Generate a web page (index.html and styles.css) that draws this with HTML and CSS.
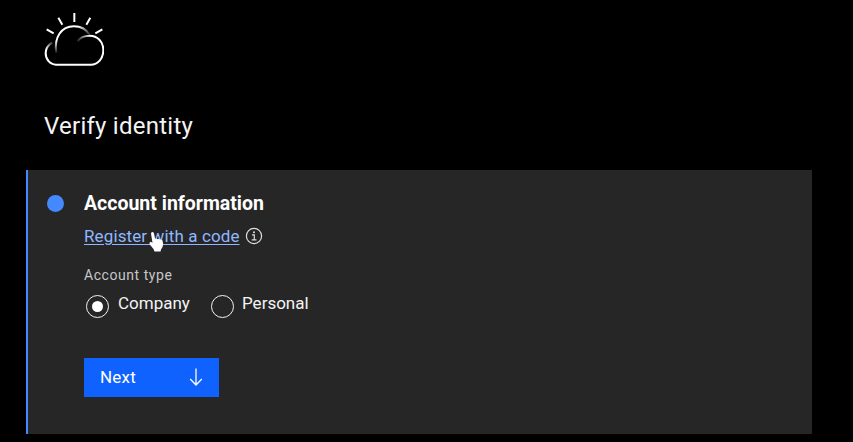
FILE: index.html
```html
<!DOCTYPE html>
<html lang="en">
<head>
<meta charset="utf-8">
<title>Verify identity</title>
<link rel="stylesheet" href="styles.css">
</head>
<body>
<main class="page">
  <svg class="logo" viewBox="30 24 180 162" fill="none" stroke="#fff" stroke-width="6">
    <defs>
      <linearGradient id="sun" gradientUnits="userSpaceOnUse" x1="67" y1="147" x2="67" y2="110"><stop offset="0" stop-color="#fff" stop-opacity="0.1"/><stop offset="1" stop-color="#fff"/></linearGradient>
      <linearGradient id="top" gradientUnits="userSpaceOnUse" x1="130" y1="70" x2="168" y2="92"><stop offset="0" stop-color="#fff"/><stop offset="1" stop-color="#fff" stop-opacity="0.15"/></linearGradient>
      <linearGradient id="puff" gradientUnits="userSpaceOnUse" x1="130" y1="112" x2="170" y2="95"><stop offset="0" stop-color="#fff" stop-opacity="0.1"/><stop offset="1" stop-color="#fff"/></linearGradient>
      <linearGradient id="left" gradientUnits="userSpaceOnUse" x1="55" y1="114" x2="38" y2="136"><stop offset="0" stop-color="#fff" stop-opacity="0.15"/><stop offset="1" stop-color="#fff"/></linearGradient>
    </defs>
    <path d="M121 27V54M73 41l12 21M169 41l-12 21M38 76l21 12M205 76l-21 12"/>
    <path stroke="url(#sun)" d="M67 147C59 100 82 67 120 67"/>
    <path stroke="url(#top)" d="M120 67C141 67 157 77 166 91"/>
    <path stroke="url(#puff)" d="M130 112C138 100 152 95 168 95"/>
    <path stroke="url(#left)" d="M55 115C42 123 35 136 35 148"/>
    <path d="M35 147C35 166 48 182 66 182H170C193 182 208 162 208 138C208 113 190 95 167 95"/>
  </svg>
  <h1 class="title">Verify identity</h1>
  <section class="card">
    <header class="step">
      <span class="dot"></span>
      <h2 class="step-title">Account information</h2>
    </header>
    <div class="content">
      <div class="register">
        <a class="link">Register with a code</a>
        <svg class="info" viewBox="0 0 18 18" fill="none" stroke="#ddd" stroke-width="1.2"><circle cx="9" cy="9" r="7.6"/><path d="M7 7.8h2.3v5M6.7 12.8h4.8"/><circle cx="9" cy="5.2" r=".45"/></svg>
        <svg class="cursor" viewBox="0 0 16 22"><path fill="#fff" d="M2 2.5Q2 1 3.5 1T5 2.5L6 8Q7.5 7 8.5 8.3Q10 7.2 11 8.7Q12.300 8 13.500 9.500L14 12Q14.500 16 12 18.500L11.500 20.500H5.500L4.500 18L.8 13.500Q-.2 11 2 10.800L3.500 12Z"/></svg>
      </div>
      <div class="label">Account type</div>
      <div class="options">
        <div class="option"><span class="radio checked"></span><span class="option-text company">Company</span></div>
        <div class="option"><span class="radio"></span><span class="option-text personal">Personal</span></div>
      </div>
      <button class="next"><span>Next</span>
        <svg class="arrow" viewBox="0 0 16 20" fill="none" stroke="#fff" stroke-width="1.3"><path d="M8 1.500V18M2.200 12L8 18L13.800 12"/></svg>
      </button>
    </div>
  </section>
</main>
</body>
</html>
```
FILE: styles.css
```css
* { box-sizing: border-box; }
body {
  margin: 0;
  background: #000;
  color: #f4f4f4;
  font-family: Roboto, sans-serif;
  overflow: hidden;
}
.page { height: 442px; padding: 12px 41px 0 26px; }
.logo { display: block; width: 60px; height: 54px; margin-left: 18px; }
.title {
  margin: 44px 0 0 18px;
  font: 400 24px/32px Roboto, sans-serif;
  letter-spacing: 0.25px;
}
.card {
  height: 264px;
  margin-top: 28px;
  padding: 19px 0 0 19px;
  background: #262626;
  border-left: 2px solid #4589ff;
}
.step { display: flex; align-items: center; height: 28px; gap: 20px; }
.dot { width: 17px; height: 17px; border-radius: 50%; background: #4589ff; }
.step-title { margin: 2px 0 0; font-size: 19.5px; line-height: 28px; font-weight: 700; color: #fff; }
.content { padding-left: 37px; }
.register { position: relative; display: flex; align-items: center; height: 24px; margin-top: 7px; gap: 6px; }
.link { width: 155px; white-space: nowrap; font-size: 17px; line-height: 24px; letter-spacing: 0.12px; color: #8fb8ff; text-decoration: underline; text-underline-offset: 2px; text-decoration-thickness: 1px; }
.info { width: 18px; height: 18px; }
.cursor { position: absolute; left: 65px; top: 7px; width: 16px; height: 22px; }
.label { margin-top: 17px; font-size: 14px; line-height: 20px; letter-spacing: 0.55px; color: #c6c6c6; }
.options { display: flex; height: 34px; margin-top: 5px; gap: 19px; }
.option { display: flex; gap: 9px; }
.radio { display: flex; width: 23px; height: 23px; margin: 5px 0 0 2px; border: 1.400px solid #f4f4f4; border-radius: 50%; }
.checked::after { content: ""; width: 11px; height: 11px; margin: auto; border-radius: 50%; background: #fff; }
.option-text { font-size: 17px; line-height: 26px; }
.company { width: 72px; }
.personal { margin-left: -1px; }
.next {
  display: flex;
  align-items: center;
  justify-content: space-between;
  width: 135px;
  height: 39px;
  margin-top: 34px;
  padding: 0 15px 2px 16px;
  border: 0;
  background: #0f62fe;
  color: #fff;
  font: 400 17px/24px Roboto, sans-serif;
  letter-spacing: 0.2px;
}
.arrow { width: 16px; height: 20px; }
```
